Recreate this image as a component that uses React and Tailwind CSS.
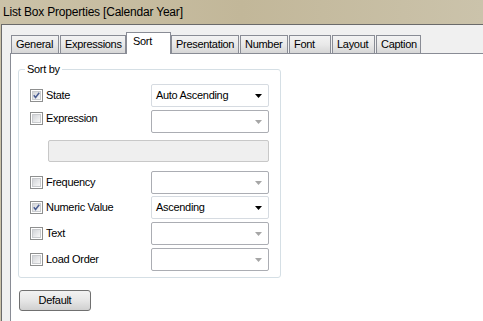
import React from "react";

const tabs = [
  { name: "General", w: 48, ml: 0 },
  { name: "Expressions", w: 66, ml: 1 },
  { name: "Sort", w: 45, ml: 0, active: true },
  { name: "Presentation", w: 68, ml: 0 },
  { name: "Number", w: 48, ml: 1 },
  { name: "Font", w: 42, ml: 1 },
  { name: "Layout", w: 43, ml: 1 },
  { name: "Caption", w: 45, ml: 1 },
];

function Tab({ t }) {
  if (t.active) {
    return (
      <div
        className="relative z-10 h-[22px] mb-[-1px] bg-white border-t border-l border-r border-[#898c95] flex items-start justify-start pl-[6px] pt-[2px] shrink-0"
        style={{ width: t.w, marginLeft: t.ml }}
      >
        <span className="leading-[13px]">{t.name}</span>
      </div>
    );
  }
  return (
    <div
      className="h-[18px] bg-gradient-to-b from-[#f3f3f3] via-[#e9e9e9] to-[#d6d6d6] border-t border-l border-r border-[#898c95] flex items-center pl-[4px] shrink-0"
      style={{ width: t.w, marginLeft: t.ml }}
    >
      <span className="leading-[13px]">{t.name}</span>
    </div>
  );
}

function Check({ checked }) {
  return (
    <div className="w-[13px] h-[13px] border border-[#8e8f8f] bg-white p-[1px] shrink-0">
      <div className="w-full h-full border border-[#c9cbce] bg-gradient-to-br from-[#d2d4d8] to-[#f8f8f8] flex items-center justify-center">
        {checked && (
          <svg width="9" height="9" viewBox="0 0 9 9">
            <path d="M1 4.2 L3.3 7 L8 1" fill="none" stroke="#4a5d92" strokeWidth="1.9" />
          </svg>
        )}
      </div>
    </div>
  );
}

function Combo({ value, enabled }) {
  return (
    <div
      className={
        "w-[118px] h-[23px] rounded-[2px] border flex items-center justify-between pl-[4px] pr-[6px] shrink-0 " +
        (enabled ? "border-[#d6dbe1] bg-white" : "border-[#abadb3] bg-white")
      }
    >
      <span className="leading-[13px]">{value || ""}</span>
      <svg width="7" height="4" viewBox="0 0 7 4">
        <path d="M0 0 H7 L3.5 4 Z" fill={enabled ? "#000000" : "#a6a6a6"} />
      </svg>
    </div>
  );
}

function Row({ label, checked, value, enabled, h = 23, alignTop, mt }) {
  return (
    <div className="flex items-start pl-[11px]" style={{ marginTop: mt }}>
      <div
        className={"w-[121px] shrink-0 flex gap-[3px] " + (alignTop ? "items-start pt-[2px]" : "items-center")}
        style={{ height: h }}
      >
        <Check checked={checked} />
        <span className="leading-[13px]">{label}</span>
      </div>
      <div style={{ height: h }} className="flex">
        <Combo value={value} enabled={enabled} />
      </div>
    </div>
  );
}

export default function App() {
  return (
    <div className="w-[483px] h-[321px] overflow-hidden flex flex-col bg-gradient-to-r from-[#cbc2a8] via-[#c2b799] to-[#cbc3ab] font-['Liberation_Sans',Arial,sans-serif] text-black">
      <div className="h-[24px] shrink-0 flex items-center pl-[3px] text-[12px] tracking-[-0.2px]">
        List Box Properties [Calendar Year]
      </div>
      <div className="flex-1 ml-[1px] border-l border-t border-[#6a6a6a] bg-[#f0f0f0] flex flex-col text-[11px] tracking-[-0.3px]">
        <div className="flex items-end pt-[7px] pl-[9px]">
          {tabs.map((t) => (
            <Tab key={t.name} t={t} />
          ))}
        </div>
        <div className="flex-1 ml-[8px] bg-white border-t border-l border-[#898c95] flex flex-col">
          <fieldset className="ml-[7px] mt-[9px] w-[263px] border border-[#d5dfe5] rounded-[3px] pb-[6px] flex flex-col">
            <legend className="ml-[6px] px-[2px] leading-[13px]">Sort by</legend>
            <Row label="State" checked value="Auto Ascending" enabled mt={8} />
            <Row label="Expression" mt={3} alignTop />
            <div className="ml-[29px] mt-[7px] w-[221px] h-[22px] rounded-[2px] border border-[#c8c8c8] bg-[#efefef]" />
            <Row label="Frequency" h={22} mt={9} />
            <Row label="Numeric Value" checked value="Ascending" enabled mt={3} />
            <Row label="Text" mt={3} />
            <Row label="Load Order" mt={3} />
          </fieldset>
          <div className="ml-[8px] mt-[12px] w-[72px] h-[21px] rounded-[3px] border border-[#707070] bg-gradient-to-b from-[#f2f2f2] via-[#e6e6e6] to-[#d0d0d0] flex items-center justify-center">
            <span className="leading-[13px]">Default</span>
          </div>
        </div>
      </div>
    </div>
  );
}
